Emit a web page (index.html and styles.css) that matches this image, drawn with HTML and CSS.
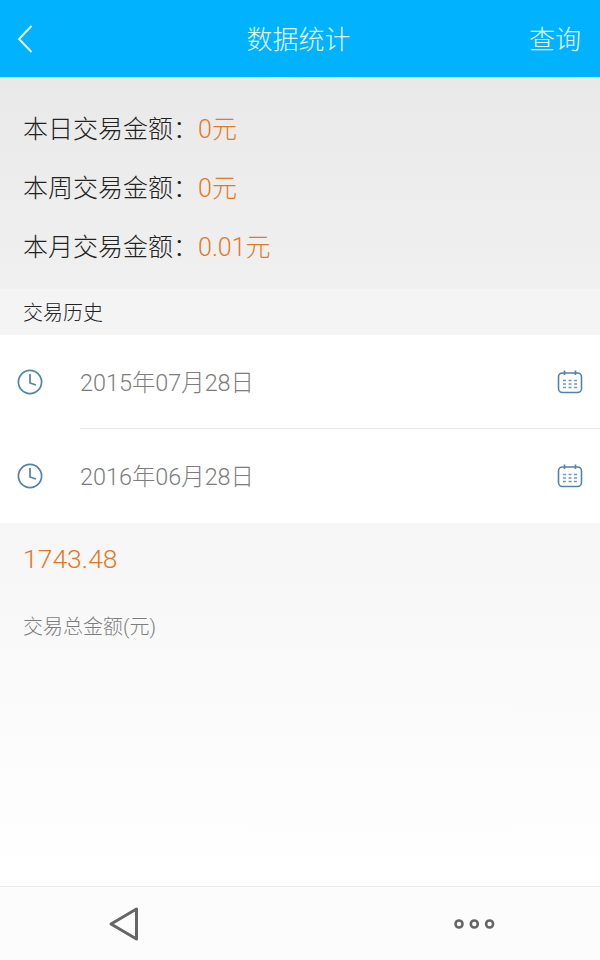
FILE: index.html
```html
<!DOCTYPE html>
<html lang="zh-CN">
<head>
    <meta charset="UTF-8">
    <meta name="viewport" content="width=device-width, initial-scale=1.0">
    <title>数据统计</title>
    <link rel="stylesheet" href="styles.css">
</head>
<body>
    <div class="page">
        <header class="topbar">
            <svg class="back" width="18" height="30" viewBox="0 0 18 30">
                <path d="M15.5 2 L3 15 L15.5 28" fill="none" stroke="#e6f7ff" stroke-width="2"/>
            </svg>
            <h1 class="title">数据统计</h1>
            <span class="query">查询</span>
        </header>

        <section class="stats">
            <div class="stat">本日交易金额：<span class="money">0元</span></div>
            <div class="stat">本周交易金额：<span class="money">0元</span></div>
            <div class="stat">本月交易金额：<span class="money">0.01元</span></div>
        </section>

        <div class="section-label">交易历史</div>

        <section class="dates">
            <div class="date-row">
                <svg class="clock" width="26" height="26" viewBox="0 0 26 26">
                    <circle cx="13" cy="13" r="11.6" fill="none" stroke="#4f84ab" stroke-width="1.7"/>
                    <path d="M13 5 V14 L19 16" fill="none" stroke="#4f84ab" stroke-width="1.7"/>
                </svg>
                <div class="date-main">
                    <span class="date-text">2015年07月28日</span>
                    <svg class="calendar" width="26" height="26" viewBox="0 0 26 26">
                        <use href="#cal"/>
                    </svg>
                </div>
            </div>
            <div class="date-row">
                <svg class="clock" width="26" height="26" viewBox="0 0 26 26">
                    <circle cx="13" cy="13" r="11.6" fill="none" stroke="#4f84ab" stroke-width="1.7"/>
                    <path d="M13 5 V14 L19 16" fill="none" stroke="#4f84ab" stroke-width="1.7"/>
                </svg>
                <div class="date-main">
                    <span class="date-text">2016年06月28日</span>
                    <svg class="calendar" width="26" height="26" viewBox="0 0 26 26">
                        <use href="#cal"/>
                    </svg>
                </div>
            </div>
        </section>

        <section class="total">
            <div class="total-num">1743.48</div>
            <div class="total-label">交易总金额(元)</div>
        </section>

        <footer class="navbar">
            <svg width="32" height="36" viewBox="0 0 32 36">
                <path d="M3 18 L28.5 3 V33 Z" fill="none" stroke="#666" stroke-width="3" stroke-linejoin="round"/>
            </svg>
            <svg width="41" height="14" viewBox="0 0 41 14">
                <circle cx="5" cy="7" r="3.5" fill="none" stroke="#666" stroke-width="2.6"/>
                <circle cx="20.3" cy="7" r="3.5" fill="none" stroke="#666" stroke-width="2.6"/>
                <circle cx="35.6" cy="7" r="3.5" fill="none" stroke="#666" stroke-width="2.6"/>
            </svg>
        </footer>
    </div>

    <!-- 日历图标 -->
    <svg width="0" height="0" class="defs">
        <symbol id="cal" viewBox="0 0 26 26">
            <rect x="1.5" y="4" width="23" height="19.5" rx="4" fill="none" stroke="#4f84ab" stroke-width="1.6"/>
            <path d="M7.5 1.5 V6 M18.5 1.5 V6" fill="none" stroke="#4f84ab" stroke-width="1.6"/>
            <path d="M6 11.5 H9 M11.5 11.5 H14.5 M17 11.5 H20 M6 15 H9 M11.5 15 H14.5 M17 15 H20 M6 18.5 H9 M11.5 18.5 H14.5 M17 18.5 H20" fill="none" stroke="#6f9abb" stroke-width="1.7"/>
        </symbol>
    </svg>
</body>
</html>
```

FILE: styles.css
```css
* {
    box-sizing: border-box;
}
body {
    margin: 0;
    font-family: Roboto, "Noto Sans CJK SC", sans-serif;
    background: #fff;
}
.page {
    width: 600px;
    height: 960px;
    display: flex;
    flex-direction: column;
    overflow: hidden;
}
.defs {
    position: absolute;
}

/* 顶部栏 */
.topbar {
    height: 77px;
    flex: none;
    background: #00b2ff;
    color: #e6f7ff;
    display: grid;
    grid-template-columns: 1fr auto 1fr;
    align-items: center;
    padding: 0 19px 0 16px;
}
.title {
    margin: 0 0 3px;
    font-size: 26px;
    font-weight: 300;
}
.query {
    justify-self: end;
    margin-bottom: 3px;
    font-size: 26px;
    font-weight: 300;
}

/* 统计 */
.stats {
    height: 212px;
    flex: none;
    background: linear-gradient(#e9e9e9, #f0f0f0);
    padding: 23px 0 0 23px;
}
.stat {
    height: 59px;
    line-height: 59px;
    font-size: 25px;
    font-weight: 300;
    color: #222;
    white-space: nowrap;
}
.money {
    color: #e07a24;
}
.section-label {
    height: 46px;
    flex: none;
    line-height: 48px;
    padding-left: 23px;
    font-size: 20px;
    font-weight: 300;
    color: #222;
    background: #f4f4f4;
}

/* 日期 */
.dates {
    flex: none;
    background: #fff;
}
.date-row {
    height: 94px;
    display: flex;
    align-items: center;
    padding-left: 17px;
}
.date-main {
    flex: 1;
    height: 94px;
    margin-left: 37px;
    padding-right: 17px;
    display: flex;
    align-items: center;
    justify-content: space-between;
}
.date-row:first-child .date-main {
    border-bottom: 1px solid #e6e6e6;
}
.date-text {
    margin-bottom: 2px;
    font-size: 23.4px;
    font-weight: 300;
    color: #7d7d7d;
}
.clock {
    flex: none;
}
.calendar {
    flex: none;
}

/* 总金额 */
.total {
    flex: 1;
    background: linear-gradient(#f6f6f6, #fff);
    padding-left: 23px;
}
.total-num {
    margin-top: 19px;
    font-size: 26.5px;
    font-weight: 300;
    line-height: 34px;
    color: #e07a24;
}
.total-label {
    margin-top: 36px;
    font-size: 20px;
    font-weight: 300;
    line-height: 30px;
    color: #7d7d7d;
}

/* 底部导航 */
.navbar {
    height: 74px;
    flex: none;
    background: #fcfcfc;
    border-top: 1px solid #ececec;
    display: flex;
    align-items: center;
    justify-content: space-between;
    padding: 0 105px 0 108px;
}
```
